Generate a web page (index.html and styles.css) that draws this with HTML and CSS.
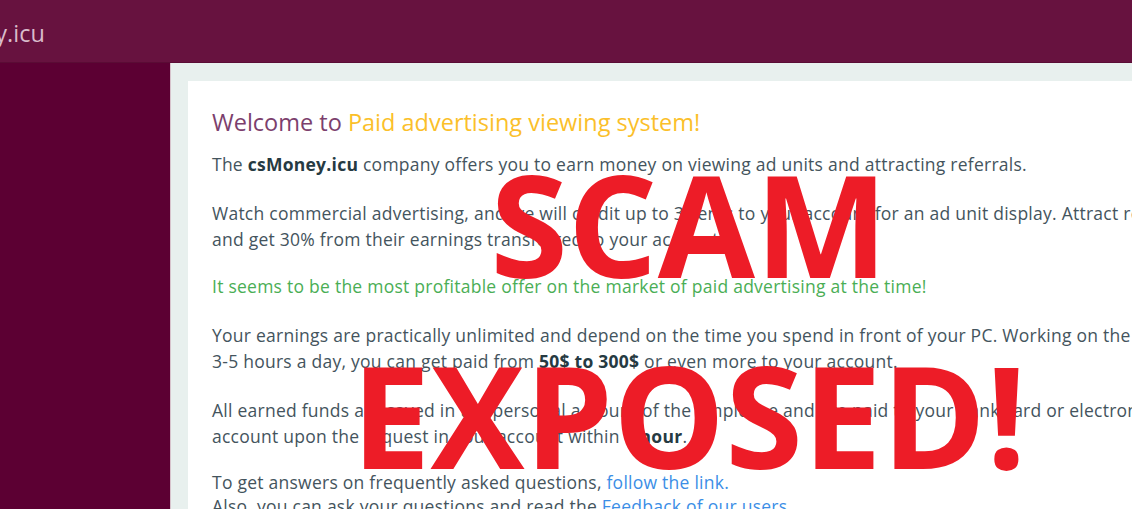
FILE: index.html
```html
<!DOCTYPE html>
<html lang="en">
<head>
    <meta charset="UTF-8">
    <meta name="viewport" content="width=device-width, initial-scale=1.0">
    <title>csMoney.icu</title>
    <link rel="stylesheet" href="styles.css">
</head>
<body>
    <header class="topbar">
        <div class="brand">csMoney.icu</div>
    </header>
    <div class="layout">
        <aside class="sidebar"></aside>
        <main class="content">
            <div class="card">
                <h1 class="title">Welcome to <span class="accent">Paid advertising viewing system!</span></h1>
                <p>The <b>csMoney.icu</b> company offers you to earn money on viewing ad units and attracting referrals.</p>
                <p class="tight">Watch commercial advertising, and we will credit up to 3 cents to your account for an ad unit display. Attract referrals<br>
                and get 30% from their earnings transferred to your account.</p>
                <p class="good">It seems to be the most profitable offer on the market of paid advertising at the time!</p>
                <p>Your earnings are practically unlimited and depend on the time you spend in front of your PC. Working on the project<br>
                3-5 hours a day, you can get paid from <b>50$ to 300$</b> or even more to your account.</p>
                <p class="tight">All earned funds are saved in the personal account of the employee and are paid to your bank card or electronic wallet<br>
                account upon the request in your account within <b>1 hour</b>.</p>
                <p class="links">To get answers on frequently asked questions, <a href="#">follow the link.</a><br>
                Also, you can ask your questions and read the <a href="#">Feedback of our users.</a></p>
            </div>
        </main>
    </div>

    <div class="stamp">
        <div class="stamp-line scam">SCAM</div>
        <div class="stamp-line exposed">EXPOSED!</div>
    </div>
</body>
</html>
```

FILE: styles.css
```css
*{
    box-sizing: border-box;
    margin: 0;
    padding: 0;
}
body{
    position: relative;
    width: 1132px;
    height: 509px;
    overflow: hidden;
    background-color: #e8f0ee;
    font-family: "Open Sans", "Noto Sans", Arial, sans-serif;
    color: #44545d;
}
.topbar{
    height: 63px;
    background-color: #67123f;
    border-bottom: 1px solid #5a0c35;
    display: flex;
    align-items: center;
    overflow: hidden;
}
.brand{
    margin-left: -90px;
    margin-top: 4px;
    font-size: 23.5px;
    color: #d9bccb;
    white-space: nowrap;
}
.layout{
    display: flex;
    height: 446px;
}
.sidebar{
    flex: 0 0 170px;
    background-color: #5c0033;
}
.content{
    flex: 0 0 auto;
    width: 1400px;
    border-left: 1px solid #d7c3cc;
    padding: 18px 0 0 17px;
}
.card{
    background-color: white;
    height: 500px;
    padding: 26px 24px;
}
.title{
    font-size: 23.5px;
    font-weight: 400;
    line-height: 30px;
    color: #7c3f6d;
    margin-bottom: 14px;
}
.accent{
    color: #fbbf2a;
}
p{
    font-size: 17.5px;
    letter-spacing: 0.25px;
    line-height: 26px;
    margin-bottom: 23px;
    white-space: nowrap;
}
p.tight{
    margin-bottom: 21px;
}
b{
    color: #263a42;
}
.good{
    color: #4aae55;
}
.links{
    line-height: 24px;
}
a{
    color: #3b8ee6;
    text-decoration: none;
}

/* the stamp over the page */
.stamp{
    position: absolute;
    left: 189px;
    top: 153px;
    width: 1000px;
    text-align: center;
    color: #ed1c27;
    font-family: "Open Sans", "Noto Sans", Arial, sans-serif;
    font-weight: 700;
    font-size: 141px;
    line-height: 1;
}
.exposed{
    margin-top: 50px;
}
```
